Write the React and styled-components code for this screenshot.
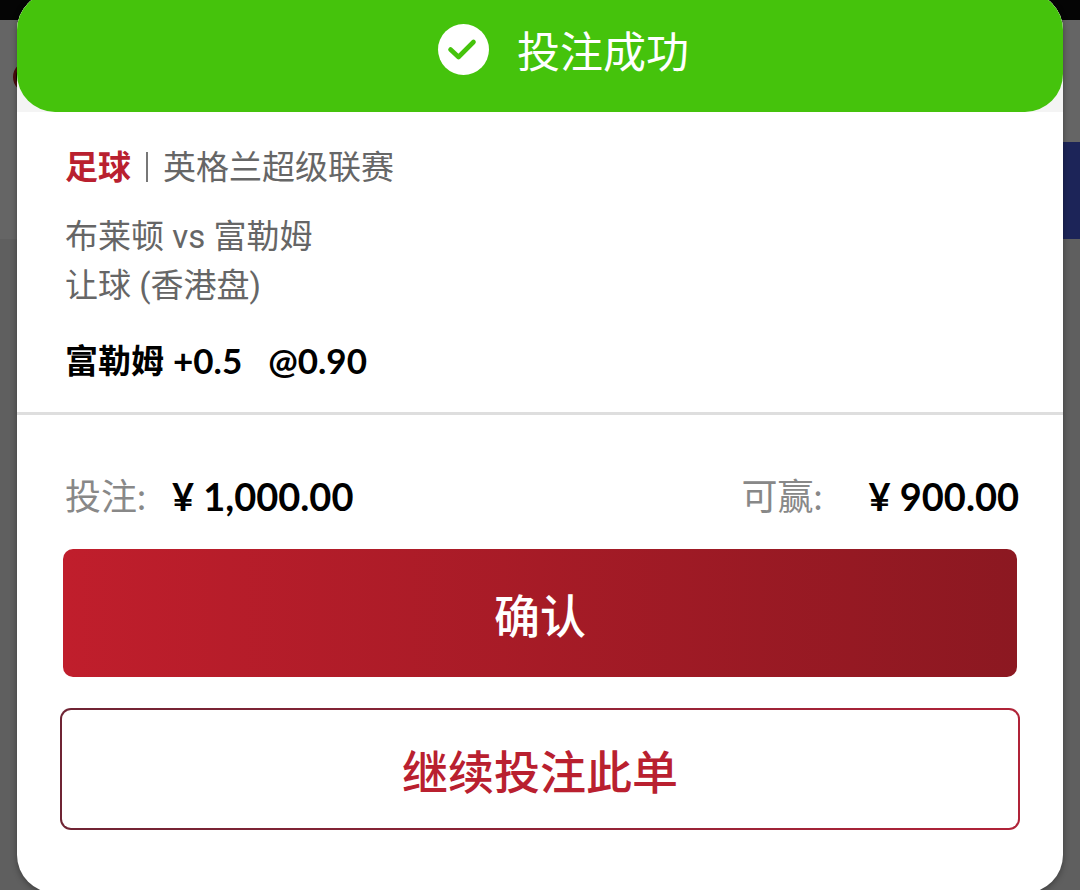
import React from 'react';
import styled, { createGlobalStyle } from 'styled-components';

const bet = {
  sport: '足球',
  league: '英格兰超级联赛',
  match: '布莱顿 vs 富勒姆',
  market: '让球 (香港盘)',
  team: '富勒姆',
  handicap: '+0.5',
  odds: '@0.90',
  stake: '¥ 1,000.00',
  win: '¥ 900.00'
};

const CheckIcon = () => (
  <svg width='52' height='52' viewBox='0 0 52 52' aria-hidden='true'>
    <circle cx='26.5' cy='25.5' r='25.5' fill='#fff' />
    <path
      d='M13.5 25.5 L21.5 33 L36.5 18'
      fill='none'
      stroke='#45c30c'
      strokeWidth='4.6'
      strokeLinecap='round'
      strokeLinejoin='round'
    />
  </svg>
);

const App = () => {
  return (
    <Page>
      <GlobalStyle />
      <Backdrop aria-hidden='true'>
        <StatusBar />
        <TopArea>
          <Logo />
          <Promo />
        </TopArea>
      </Backdrop>

      <Modal role='dialog' aria-labelledby='bet-result'>
        <BannerWrap>
          <Banner>
            <CheckIcon />
            <Title id='bet-result'>投注成功</Title>
          </Banner>
        </BannerWrap>

        <Details>
          <Line>
            <Sport>{bet.sport}</Sport>
            <Separator />
            {bet.league}
          </Line>
          <Match>
            <Line>{bet.match}</Line>
            <Line>{bet.market}</Line>
          </Match>
          <Pick>
            <span>{bet.team}</span>
            <Handicap>{bet.handicap}</Handicap>
            <Odds>{bet.odds}</Odds>
          </Pick>
        </Details>

        <Amounts>
          <Amount $gap={26}>
            <dt>投注:</dt>
            <dd>{bet.stake}</dd>
          </Amount>
          <Amount $gap={46}>
            <dt>可赢:</dt>
            <dd>{bet.win}</dd>
          </Amount>
        </Amounts>

        <Actions>
          <Confirm type='button'>确认</Confirm>
          <Again type='button'>继续投注此单</Again>
        </Actions>
      </Modal>
    </Page>
  );
};

const GlobalStyle = createGlobalStyle`
  * {
    box-sizing: border-box;
  }

  body {
    margin: 0;
    background: #5f5f5f;
    font-family: Lato, 'Noto Sans CJK SC', sans-serif;
  }

  button {
    font-family: inherit;
    cursor: pointer;
  }
`;

const Page = styled.div`
  position: relative;
  height: 100vh;
  overflow: hidden;
  display: flow-root;
`;

const Backdrop = styled.div`
  position: absolute;
  inset: 0;
  background: #5f5f5f;
`;

const StatusBar = styled.div`
  height: 20px;
  background: #050505;
`;

const TopArea = styled.div`
  display: flex;
  justify-content: space-between;
  height: 219px;
  background: #656565;
`;

const Logo = styled.div`
  width: 32px;
  height: 32px;
  margin: 41px 13px;
  border-radius: 50%;
  border: 3px solid #4a0a0c;
  background: #0c0000;
`;

const Promo = styled.div`
  align-self: flex-end;
  width: 40px;
  height: 97px;
  background: #1c2458;
`;

const Modal = styled.main`
  position: relative;
  margin: -8px 17px 0;
  padding-bottom: 63px;
  border-radius: 38px;
  background: #fff;
  box-shadow: 0 2px 6px rgba(0, 0, 0, 0.35);
`;

const BannerWrap = styled.header`
  border-radius: 38px 38px 0 0;
  background: #f4f4f4;
`;

const Banner = styled.div`
  display: flex;
  justify-content: center;
  align-items: center;
  gap: 28px;
  height: 120px;
  padding: 0 0 4px 46px;
  border-radius: 38px;
  background: #45c30c;
`;

const Title = styled.h1`
  margin: 0;
  padding-top: 4px;
  color: #fff;
  font-size: 43px;
  font-weight: 400;
  line-height: 50px;
`;

const Details = styled.section`
  padding: 30px 48px 27px;
  border-bottom: 3px solid #dedede;
`;

const Line = styled.div`
  display: flex;
  align-items: center;
  color: #666;
  font-size: 33px;
  line-height: 49px;
`;

const Sport = styled.strong`
  color: #b9202f;
  font-weight: 700;
`;

const Separator = styled.span`
  width: 2px;
  height: 30px;
  margin: 0 15px;
  background: #777;
`;

const Match = styled.div`
  margin: 21px 0 26px;
  font-family: Roboto, 'Noto Sans CJK SC', sans-serif;
`;

const Pick = styled(Line)`
  color: #000;
  font-weight: 700;
`;

const Handicap = styled.span`
  margin-left: 9px;
  font-size: 35px;
`;

const Odds = styled(Handicap)`
  margin-left: 26px;
`;

const Amounts = styled.dl`
  display: flex;
  justify-content: space-between;
  margin: 0;
  padding: 56px 44px 28px 48px;
`;

const Amount = styled.div`
  display: flex;
  align-items: center;
  gap: ${({ $gap }) => $gap}px;
  line-height: 50px;

  dt {
    color: #888;
    font-size: 36px;
    font-weight: 400;
  }

  dd {
    margin: 0;
    color: #000;
    font-size: 38px;
    font-weight: 700;
  }
`;

const Actions = styled.div`
  display: flex;
  flex-direction: column;
  gap: 31px;
  padding: 0 43px;
`;

const Confirm = styled.button`
  height: 128px;
  margin: 0 3px;
  border: none;
  border-radius: 10px;
  background: linear-gradient(to right, #c01e2c, #8c1821);
  color: #fff;
  font-size: 46px;
  font-weight: 500;
`;

const Again = styled.button`
  height: 122px;
  border: 2px solid transparent;
  border-radius: 11px;
  background: linear-gradient(#fff, #fff) padding-box,
    linear-gradient(to right, #6f2434, #b02338) border-box;
  color: #b9202f;
  font-size: 46px;
  font-weight: 500;
`;

export default App;
